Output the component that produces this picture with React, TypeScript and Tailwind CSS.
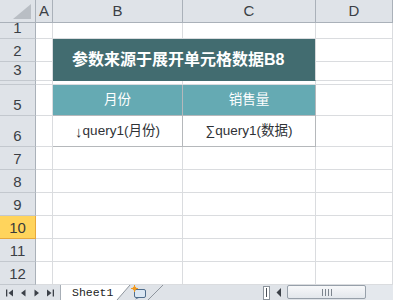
import React from "react";

const HB = "border-[#aab1b9]";
const GL = "border-[#dadcdf]";
const CB = "border-[#b5b8bb]";

function RowHead({ n, hl }: { n?: string; hl?: boolean }) {
  return (
    <div
      className={`flex items-end justify-center pb-[3px] border-r border-b overflow-visible text-[15px] leading-[15px] ${
        hl
          ? "bg-[#ffd45c] border-[#e7a83c] text-[#3a3a3a]"
          : `bg-[#dfe3e8] ${HB} border-b-[#c3c8ce] text-[#3b3f45]`
      }`}
    >
      {n}
    </div>
  );
}

function Cell({ cls = "" }: { cls?: string }) {
  return <div className={`border-r border-b ${GL} ${cls}`} />;
}

function Arrow({ dir, bar }: { dir: "l" | "r"; bar?: boolean }) {
  return (
    <svg width="8" height="8" viewBox="0 0 8 8">
      {dir === "l" ? (
        <>
          {bar && <rect x="0" y="0.5" width="1.3" height="7" fill="#3c4148" />}
          <polygon points={bar ? "7,0.5 2.5,4 7,7.5" : "6.5,0.5 2,4 6.5,7.5"} fill="#3c4148" />
        </>
      ) : (
        <>
          <polygon points={bar ? "1,0.5 5.5,4 1,7.5" : "1.5,0.5 6,4 1.5,7.5"} fill="#3c4148" />
          {bar && <rect x="6.7" y="0.5" width="1.3" height="7" fill="#3c4148" />}
        </>
      )}
    </svg>
  );
}

export default function App() {
  const rows7 = ["7", "8", "9", "10", "11", "12"];
  return (
    <div className="w-[393px] h-[300px] bg-white overflow-hidden font-['Liberation_Sans','Noto_Sans_CJK_SC',sans-serif]">
      <div className="grid grid-cols-[36px_17px_130px_133px_1fr] grid-rows-[23px_16px_23px_19px_4px_31px_31px_23px_23px_23px_23px_23px_23px]">
        <div className={`bg-[#dfe3e8] border-r border-b ${HB} flex items-start justify-start`}>
          <svg width="35" height="22" viewBox="0 0 35 22">
            <polygon points="31,4 31,19 13,19" fill="#b9bec4" />
          </svg>
        </div>
        {["A", "B", "C", "D"].map((c) => (
          <div
            key={c}
            className={`bg-[#dfe3e8] border-r border-b ${HB} flex items-center justify-center text-[15px] text-[#3b3f45] pt-[1px]`}
          >
            {c}
          </div>
        ))}

        <RowHead n="1" />
        <Cell />
        <Cell />
        <Cell />
        <Cell />

        <RowHead n="2" />
        <Cell />
        <div className="row-span-2 col-span-2 bg-[#426c70] border-r border-b border-r-[#d6d8da] border-b-[#426c70] flex items-center pl-[19px] text-white font-bold text-[16px] leading-[18px]">
          参数来源于展开单元格数据B8
        </div>
        <Cell />

        <RowHead n="3" />
        <Cell />
        <Cell />

        <div className={`bg-[#dfe3e8] border-r border-b ${HB} border-b-[#c3c8ce]`} />
        <Cell />
        <Cell />
        <Cell />
        <Cell />

        <RowHead n="5" />
        <Cell />
        <div className={`bg-[#65aab3] border-r border-b ${CB} flex items-center justify-center text-white text-[13.5px]`}>
          月份
        </div>
        <div className={`bg-[#65aab3] border-r border-b ${CB} flex items-center justify-center text-white text-[13.5px]`}>
          销售量
        </div>
        <Cell />

        <RowHead n="6" />
        <Cell />
        <div className={`border-r border-b ${CB} flex items-center justify-center text-[#2f3236] text-[13.5px]`}>
          <span className="text-[15px] leading-none">↓</span>query1(月份)
        </div>
        <div className={`border-r border-b ${CB} flex items-center justify-center text-[#2f3236] text-[13.5px]`}>
          ∑query1(数据)
        </div>
        <Cell />

        {rows7.map((n) => (
          <React.Fragment key={n}>
            <RowHead n={n} hl={n === "10"} />
            <Cell />
            <Cell />
            <Cell />
            <Cell />
          </React.Fragment>
        ))}
      </div>

      <div className="h-[15px] flex bg-[#dfe3e8]">
        <div className="w-[61px] flex items-center justify-around px-[3px] border-r border-[#a7aeb6]">
          <Arrow dir="l" bar />
          <Arrow dir="l" />
          <Arrow dir="r" />
          <Arrow dir="r" bar />
        </div>
        <div className="relative w-[104px] h-[15px]">
          <svg className="absolute inset-0" width="104" height="15" viewBox="0 0 104 15">
            <polygon points="0,0 69,0 56,15 0,15" fill="#ffffff" />
            <line x1="56" y1="15" x2="69" y2="0" stroke="#8e959d" strokeWidth="1" />
            <line x1="87" y1="15" x2="102" y2="0" stroke="#8e959d" strokeWidth="1" />
            <rect x="73.5" y="4.5" width="11" height="8" rx="1.5" fill="#dbe7f3" stroke="#4f6d8c" strokeWidth="1" />
            <path d="M76 12.5 L74 14.5 L79 12.5" fill="#4f6d8c" />
            <g fill="#f29a1f">
              <circle cx="73.5" cy="3.5" r="2" />
              <rect x="73" y="0" width="1" height="7" />
              <rect x="70" y="3" width="7" height="1" />
            </g>
          </svg>
          <span className="relative block pl-[11px] text-[11.5px] leading-[15px] text-[#222] font-['Liberation_Mono',monospace]">
            Sheet1
          </span>
        </div>
        <div className="w-[98px]" />
        <div className="w-[7px] h-[14px] mt-[0.5px] bg-white border border-[#8c949c] flex items-center justify-center">
          <div className="w-[1px] h-[9px] bg-[#4a5058]" />
        </div>
        <div className="w-[17px] flex items-center justify-center">
          <svg width="6" height="9" viewBox="0 0 6 9">
            <polygon points="5,0 0.5,4.5 5,9" fill="#3c4148" />
          </svg>
        </div>
        <div className="w-[79px] h-[14px] rounded-[2px] border border-[#97a0aa] bg-gradient-to-b from-[#f7f8fa] to-[#e3e7ec] flex items-center justify-center gap-[1px]">
          <div className="w-[1px] h-[7px] bg-[#7d858e]" />
          <div className="w-[1px] h-[7px] bg-[#7d858e] ml-[1px]" />
          <div className="w-[1px] h-[7px] bg-[#7d858e] ml-[1px]" />
          <div className="w-[1px] h-[7px] bg-[#7d858e] ml-[1px]" />
        </div>
        <div className="flex-1 bg-[#e4e8ed]" />
      </div>
    </div>
  );
}
